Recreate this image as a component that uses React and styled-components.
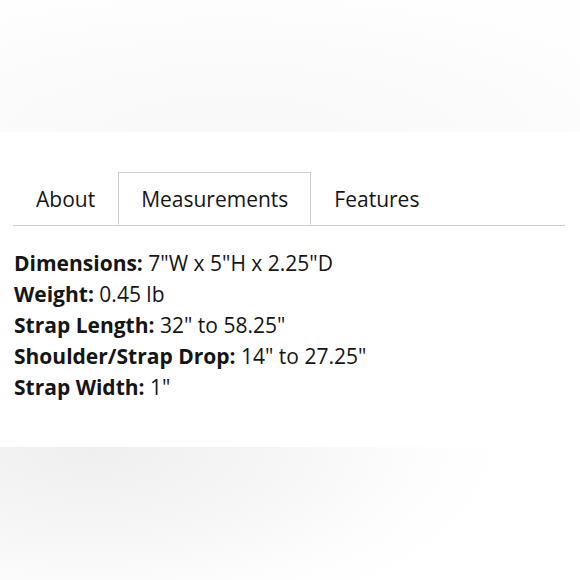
import React, { useState } from "react";
import styled, { createGlobalStyle } from "styled-components";

const GlobalStyle = createGlobalStyle`
  html, body {
    margin: 0;
    padding: 0;
    background: #ffffff;
  }
  body {
    font-family: "Open Sans", "Noto Sans", sans-serif;
    color: #151515;
  }
`;

const Page = styled.div`
  width: 580px;
  height: 580px;
  display: flex;
  flex-direction: column;
  overflow: hidden;
`;

const TopBand = styled.div`
  height: 132px;
  flex-shrink: 0;
  background: radial-gradient(
    ellipse 460px 150px at 230px 140px,
    #f8f8f8 0%,
    #fbfbfb 60%,
    #fefefe 100%
  );
`;

const Panel = styled.section`
  height: 315px;
  flex-shrink: 0;
  background: #ffffff;
  padding: 40px 14px 0 13px;
  box-sizing: border-box;
`;

const TabList = styled.div`
  display: flex;
  border-bottom: 1px solid #cfcfcf;
  margin-right: 1px;
`;

const Tab = styled.button`
  appearance: none;
  font-family: inherit;
  font-size: 21px;
  color: #151515;
  background: ${(p) => (p.$active ? "#ffffff" : "transparent")};
  height: 53px;
  padding: 2px 22px 0;
  margin-bottom: ${(p) => (p.$active ? "-1px" : "0")};
  border: 1px solid ${(p) => (p.$active ? "#cfcfcf" : "transparent")};
  border-bottom-color: ${(p) => (p.$active ? "#ffffff" : "transparent")};
  cursor: pointer;
  line-height: 1;
`;

const Specs = styled.ul`
  list-style: none;
  margin: 0;
  padding: 22px 0 0 1px;
`;

const Spec = styled.li`
  font-size: 21px;
  line-height: 31px;
  white-space: nowrap;
`;

const Label = styled.strong`
  font-weight: 700;
`;

const BottomBand = styled.div`
  flex: 1;
  background: radial-gradient(
    ellipse 420px 190px at 90px 0px,
    #efefef 0%,
    #f6f6f6 45%,
    #fdfdfd 80%,
    #ffffff 100%
  );
`;

const tabs = ["About", "Measurements", "Features"];

const specs = [
  ["Dimensions:", '7"W x 5"H x 2.25"D'],
  ["Weight:", "0.45 lb"],
  ["Strap Length:", '32" to 58.25"'],
  ["Shoulder/Strap Drop:", '14" to 27.25"'],
  ["Strap Width:", '1"'],
];

export default function App() {
  const [active, setActive] = useState("Measurements");

  return (
    <Page>
      <GlobalStyle />
      <TopBand />
      <Panel>
        <TabList>
          {tabs.map((t) => (
            <Tab key={t} $active={t === active} onClick={() => setActive(t)}>
              {t}
            </Tab>
          ))}
        </TabList>
        <Specs>
          {specs.map(([label, value]) => (
            <Spec key={label}>
              <Label>{label}</Label> {value}
            </Spec>
          ))}
        </Specs>
      </Panel>
      <BottomBand />
    </Page>
  );
}
